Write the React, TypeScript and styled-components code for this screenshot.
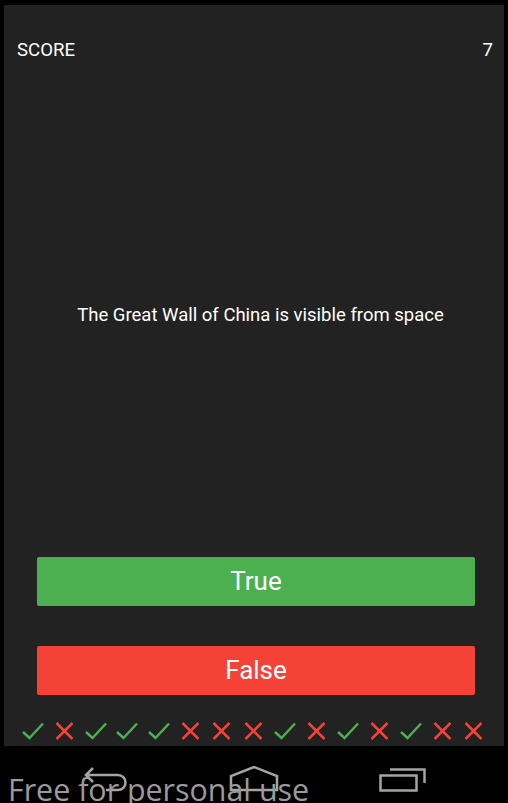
import React, { FunctionComponent } from 'react'
import styled, { createGlobalStyle } from 'styled-components'

const GlobalStyle = createGlobalStyle`
    html, body {
        margin: 0;
        padding: 0;
        background: #000000;
        overflow: hidden;
    }
    body {
        width: 508px;
        height: 803px;
    }
`

const Root = styled.div`
    display: flex;
    flex-direction: column;
    width: 508px;
    height: 803px;
    background: #000000;
    font-family: Roboto, 'Liberation Sans', sans-serif;
    position: relative;
    overflow: hidden;
`

const Panel = styled.div`
    display: flex;
    flex-direction: column;
    margin: 5px 4px 0 4px;
    height: 741px;
    background: #222222;
`

const ScoreBar = styled.div`
    display: flex;
    justify-content: space-between;
    margin-top: 36px;
    padding: 0 11px 0 13px;
    height: 18px;
    color: #ffffff;
    font-size: 18.6px;
    line-height: 18px;
`

const Question = styled.div`
    flex: 1;
    display: flex;
    align-items: center;
    justify-content: center;
    padding: 14px 0 0 13px;
    color: #ffffff;
    font-size: 18.5px;
    line-height: 18px;
`

const Answer = styled.button<{ $bg: string }>`
    display: block;
    margin: 0 29px 0 33px;
    height: 49px;
    padding: 0;
    border: none;
    border-radius: 2px;
    background: ${(p) => p.$bg};
    color: #ffffff;
    font-family: Roboto, 'Liberation Sans', sans-serif;
    font-size: 26px;
    line-height: 49px;
    text-align: center;
    & + & {
        margin-top: 40px;
    }
`

const Marks = styled.div`
    display: flex;
    margin-top: 27px;
    padding-left: 13px;
    height: 18px;
    margin-bottom: 6px;
`

const Mark = styled.div`
    display: flex;
    justify-content: center;
    align-items: center;
    width: 31.5px;
    height: 18px;
`

const NavBar = styled.div`
    display: flex;
    justify-content: center;
    align-items: flex-start;
    gap: 99px;
    height: 57px;
    padding-top: 20px;
    box-sizing: border-box;
`

const NavIcon = styled.svg`
    width: 50px;
    height: 27px;
    fill: none;
    stroke: #a4a4a4;
    stroke-width: 2.5;
`

const Watermark = styled.div`
    position: absolute;
    left: 8px;
    top: 775px;
    color: #9a9a9a;
    font-family: 'Open Sans', 'Noto Sans', sans-serif;
    font-size: 30.4px;
    line-height: 30px;
    white-space: nowrap;
    pointer-events: none;
`

const GREEN = '#4caf50'
const RED = '#f44336'

const Check: FunctionComponent = () => (
    <svg width="22" height="18" viewBox="0 0 22 18">
        <path d="M1 10 L7.5 16 L21 1.5" fill="none" stroke={GREEN} strokeWidth="2.5" />
    </svg>
)

const Cross: FunctionComponent = () => (
    <svg width="19" height="18" viewBox="0 0 19 18">
        <path d="M1.5 1 L17.5 17 M17.5 1 L1.5 17" fill="none" stroke={RED} strokeWidth="2.5" />
    </svg>
)

const results = [true, false, true, true, true, false, false, false, true, false, true, false, true, false, false]

const App: FunctionComponent = () => {
    return (
        <Root>
            <GlobalStyle />
            <Panel>
                <ScoreBar>
                    <span>SCORE</span>
                    <span>7</span>
                </ScoreBar>
                <Question>The Great Wall of China is visible from space</Question>
                <Answer $bg={GREEN}>True</Answer>
                <Answer $bg={RED}>False</Answer>
                <Marks>
                    {results.map((ok, i) => (
                        <Mark key={i}>{ok ? <Check /> : <Cross />}</Mark>
                    ))}
                </Marks>
            </Panel>
            <NavBar>
                <NavIcon viewBox="0 0 50 27">
                    <path d="M13 2 L6 9 L13 16 M6 9 H38 A7.5 7.5 0 0 1 38 24 H26" />
                </NavIcon>
                <NavIcon viewBox="0 0 50 27">
                    <path d="M2 24 V10 L25 1 L48 10 V24 Z" />
                </NavIcon>
                <NavIcon viewBox="0 0 50 27">
                    <rect x="2.5" y="9.5" width="36" height="15" />
                    <path d="M12 3.5 H46.5 V17" />
                </NavIcon>
            </NavBar>
            <Watermark>Free for personal use</Watermark>
        </Root>
    )
}

export default App
